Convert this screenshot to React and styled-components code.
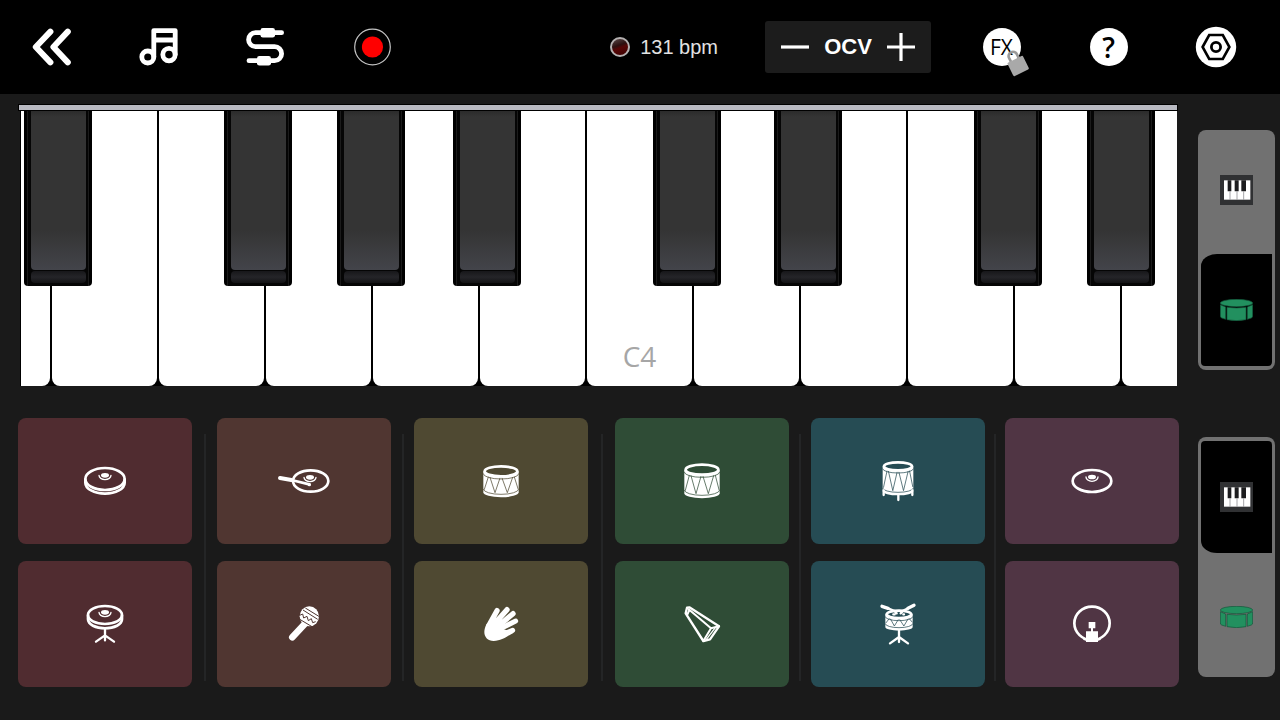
import React from 'react'
import styled, { createGlobalStyle, css } from 'styled-components'

const GlobalStyle = createGlobalStyle`
    * {
        box-sizing: border-box;
    }

    body {
        margin: 0;
        background: #1a1a1a;
        font-family: "Liberation Sans", Arial, sans-serif;
    }

    button {
        margin: 0;
        padding: 0;
        border: 0;
        background: none;
        color: inherit;
        font: inherit;
        cursor: pointer;
    }

    svg {
        display: block;
        flex: none;
    }
`

const Page = styled.div`
    display: flex;
    flex-direction: column;
    min-height: 100vh;
    background: #1a1a1a;
`

/* ---------- top bar ---------- */

const TopBar = styled.header`
    display: flex;
    align-items: center;
    gap: 37px;
    height: 94px;
    padding: 0 31px 0 17px;
    background: #000;
    color: #fff;
`

const BarGroup = styled.div`
    display: flex;
    align-items: center;
    gap: 40px;
`

const TempoGroup = styled.div`
    display: flex;
    align-items: center;
    gap: 47px;
    margin-left: auto;
`

const BarButton = styled.button`
    display: flex;
    align-items: center;
    justify-content: center;
    width: 67px;
    height: 67px;
`

const Tempo = styled.button`
    display: flex;
    align-items: center;
    gap: 10px;
    color: #e2e2e2;
    font-size: 20px;
    line-height: 24px;
`

const Led = styled.span`
    width: 20px;
    height: 20px;
    border: 2px solid #b4b0b0;
    border-radius: 50%;
    background: linear-gradient(160deg, #5a4a4a 0%, #2c1010 40%, #560606 55%, #3a0000 100%);
`

const Stepper = styled.div`
    display: flex;
    align-items: center;
    justify-content: space-between;
    width: 166px;
    height: 52px;
    padding: 0 16px;
    border-radius: 3px;
    background: #1c1c1c;
    font-size: 22px;
    font-weight: bold;
    line-height: 26px;
`

const StepButton = styled.button`
    display: flex;
    align-items: center;
    height: 52px;
`

const Badge = styled.span`
    position: relative;
    display: flex;
    align-items: center;
    justify-content: center;
    width: 38px;
    height: 38px;
    border-radius: 50%;
    background: #fff;
    color: #000;
    font-family: "Open Sans", "Noto Sans", sans-serif;
    font-size: ${({ $large }) => ($large ? 28 : 21)}px;
    font-weight: ${({ $large }) => ($large ? 600 : 500)};
    line-height: 38px;
`

const Lock = styled.svg`
    position: absolute;
    left: 20px;
    top: 20px;
`

/* ---------- layout ---------- */

const Body = styled.main`
    display: flex;
    gap: 19px;
    padding: 10px 5px 32px 18px;
`

const Stage = styled.div`
    flex: 1;
    min-width: 0;
`

const Sidebar = styled.aside`
    display: flex;
    flex-direction: column;
    gap: 67px;
    width: 77px;
    padding-top: 26px;
`

/* ---------- keyboard ---------- */

const Piano = styled.section`
    margin: 0 1px 32px 0;
`

const Rail = styled.div`
    height: 7px;
    border: 1px solid #000;
    background: #b9bac2;
`

const KeyBed = styled.div`
    position: relative;
    display: grid;
    grid-template-columns: 29fr repeat(10, 105fr) 55fr;
    gap: 2px;
    height: 275px;
    margin: 0 1px 0 2px;
    border-left: 1px solid #000;
    background: #000;
`

const WhiteKey = styled.button`
    display: flex;
    align-items: flex-end;
    justify-content: center;
    padding-bottom: 11px;
    background: #fff;
    border-radius: 0 0 8px 8px;
    color: #a6a6a6;
    font-family: "Open Sans", "Noto Sans", sans-serif;
    font-size: 28px;
    font-weight: 500;
    line-height: 38px;

    &:first-child {
        border-bottom-left-radius: 0;
    }

    &:nth-child(12) {
        border-bottom-right-radius: 0;
    }
`

const BlackKey = styled.button`
    position: absolute;
    top: 0;
    left: calc(100% * ${({ $at }) => $at} / 1156);
    display: flex;
    flex-direction: column;
    gap: 1px;
    width: calc(100% * 68 / 1156);
    height: 175px;
    padding: 0 6px 3px 7px;
    border-radius: 0 0 4px 4px;
    background: linear-gradient(90deg, #000 0 3px, #1b1b1b 3px 4px, #050505 4px calc(100% - 4px), #1b1b1b calc(100% - 4px) calc(100% - 3px), #000 calc(100% - 3px));
`

const KeyFace = styled.span`
    flex: 1;
    border-radius: 0 0 4px 4px;
    background: linear-gradient(#2b2b2b 0, #343434 6px, #343434 75%, #43444a 100%);
`

const KeyLip = styled.span`
    height: 12px;
    border-radius: 4px;
    background: linear-gradient(#17171a, #252529 50%, #131315);
`

/* ---------- pads ---------- */

const PadBoard = styled.section`
    display: grid;
    grid-template-columns: 174fr 25fr 174fr 23fr 174fr 27fr 174fr 22fr 174fr 20fr 174fr;
`

const PadColumn = styled.div`
    display: flex;
    flex-direction: column;
    gap: 17px;
`

const Divider = styled.div`
    justify-self: center;
    width: 2px;
    margin: 16px 0 6px;
    background: #242526;
`

/* color is the pad's own tone, the icons use it for their cut-out lines */
const Pad = styled.button`
    display: flex;
    align-items: center;
    justify-content: center;
    height: 126px;
    border-radius: 8px;
    background: ${({ $tone }) => $tone};
    color: ${({ $tone }) => $tone};
`

/* ---------- side switches ---------- */

const Switch = styled.div`
    display: flex;
    flex-direction: column;
    border-radius: 8px;
    background: #717171;
`

const SwitchHalf = styled.button`
    display: flex;
    align-items: center;
    justify-content: center;
    height: 120px;

    ${({ $active, $side }) => $active && css`
        height: 112px;
        margin: 4px 3px;
        background: #000;
        border-radius: ${$side === 'top' ? '4px 4px 0 16px / 4px 4px 0 12px' : '16px 0 4px 4px / 12px 0 4px 4px'};
    `}
`

/* ---------- bar icons ---------- */

const BarSvg = ({ children }) => (
    <svg width="44" height="44" viewBox="0 0 44 44" fill="none" stroke="#fff" strokeLinecap="round" strokeLinejoin="round">
        {children}
    </svg>
)

const BackIcon = () => (
    <BarSvg>
        <path strokeWidth="6" d="M21.4 6.6 6.8 22l14.6 15.4M38.800 6.600 24.400 22 38.800 37.400" />
    </BarSvg>
)

const NotesIcon = () => (
    <BarSvg>
        <g strokeWidth="4.8">
            <circle cx="11.8" cy="32" r="6" />
            <circle cx="33" cy="29.6" r="6.200" />
            <path d="M17.8 32V5.600h21.400v24M17.800 15h21.400" />
        </g>
    </BarSvg>
)

const CableIcon = () => (
    <BarSvg>
        <path strokeWidth="4.8" d="M38.600 7.700H12.600a7 7 0 0 0 0 14h19a7 7 0 0 1 0 14H6" />
        <rect x="17.5" y="3" width="14.500" height="9.600" rx="2.4" fill="#fff" stroke="none" />
        <rect x="14" y="31" width="14" height="9.600" rx="2.4" fill="#fff" stroke="none" />
    </BarSvg>
)

const RecordIcon = () => (
    <BarSvg>
        <circle cx="22.500" cy="22" r="17.8" stroke="#c4c4c4" strokeWidth="1.2" />
        <circle cx="22.500" cy="22" r="10.6" fill="#f00" stroke="none" />
    </BarSvg>
)

const SettingsIcon = () => (
    <svg width="42" height="42" viewBox="-21 -21 42 42" fill="none" stroke="#000">
        <circle r="20.2" fill="#fff" stroke="none" />
        <path strokeWidth="2.6" d="M-13.4 0-6.8-12H6.8L13.4 0 6.8 12H-6.8Z" />
        <circle r="4.6" strokeWidth="2.8" />
    </svg>
)

const StepIcon = ({ plus }) => (
    <svg width="28" height="28" viewBox="0 0 28 28" stroke="#fff" strokeWidth="3.2">
        <path d={plus ? 'M0 14h28M14 0v28' : 'M0 14h28'} />
    </svg>
)

/* ---------- pad icons ---------- */

const PadSvg = ({ children }) => (
    <svg width="60" height="60" viewBox="-90 -90 180 180" fill="none" stroke="#fff" strokeWidth="8" strokeLinecap="round" strokeLinejoin="round">
        {children}
    </svg>
)

const Bell = ({ x = 0, y }) => (
    <g transform={`translate(${x} ${y})`}>
        <ellipse rx="12" ry="7" fill="#fff" stroke="none" />
        <path strokeWidth="4" d="M-18 0A18 13 0 0 0 18 0" />
    </g>
)

const Tripod = ({ x = 0, top, bottom }) => (
    <path strokeWidth="7" d={`M${x} ${top}V${bottom - 4}M${x - 27} ${bottom}L${x} ${bottom - 19}L${x + 27} ${bottom}`} />
)

const Drum = ({ x = 0, rx, ry, top, bottom }) => {
    const rim = top + ry + 4
    const base = bottom - ry
    const u = rx / 53
    const hi = rim + ry + 4
    const lo = bottom - 14
    return (
        <g transform={`translate(${x} 0)`}>
            <path fill="#fff" stroke="none" d={`M${-rx} ${rim}V${base}A${rx} ${ry} 0 0 0 ${rx} ${base}V${rim}Z`} />
            <g stroke="currentColor" strokeWidth="2.2">
                <path d={`M${-rx} ${rim + 8}A${rx} ${ry} 0 0 0 ${rx} ${rim + 8}M${-rx} ${base - 9}A${rx} ${ry} 0 0 0 ${rx} ${base - 9}`} />
                <path d={`M${-50 * u} ${lo - 10}L${-38 * u} ${hi - 2}M${-33 * u} ${hi - 1}L${-18 * u} ${lo}L${-3 * u} ${hi + 1}M${3 * u} ${hi + 1}L${19 * u} ${lo}L${35 * u} ${hi - 1}M${40 * u} ${hi - 2}L${51 * u} ${lo - 12}`} />
            </g>
            <ellipse cy={rim} rx={rx - 4} ry={ry} fill="currentColor" />
        </g>
    )
}

const HiHat = () => (
    <PadSvg>
        <ellipse cy="-6" rx="59" ry="33" />
        <path d="M-59-4V5A59 33 0 0 0 59 5V-4" />
        <Bell y={-17} />
    </PadSvg>
)

const RideStick = () => (
    <PadSvg>
        <ellipse cx="20" rx="53" ry="32" />
        <Bell x={18} y={-11} />
        <path strokeWidth="12" d="M-72-9-38-3" />
        <path strokeWidth="8" d="M-38-3 16 10" />
        <circle cx="16" cy="11" r="5" fill="#fff" stroke="none" />
    </PadSvg>
)

const Snare = () => (
    <PadSvg>
        <Drum rx={53} ry={15} top={-48} bottom={49} />
    </PadSvg>
)

const Tom = () => (
    <PadSvg>
        <Drum rx={53} ry={15} top={-53} bottom={52} />
    </PadSvg>
)

const FloorTom = () => (
    <PadSvg>
        <Drum rx={46} ry={12} top={-60} bottom={43} />
        <path strokeWidth="7" d="M-43 28V42M43 28V42M1 42V57" />
    </PadSvg>
)

const Cymbal = () => (
    <PadSvg>
        <ellipse rx="58" ry="33" />
        <Bell y={-12} />
    </PadSvg>
)

const HiHatStand = () => (
    <PadSvg>
        <ellipse cy="-27" rx="51" ry="27" />
        <path d="M-51-25V-14A51 27 0 0 0 51-14V-25" />
        <Bell y={-35} />
        <Tripod top={18} bottom={53} />
    </PadSvg>
)

const Maraca = () => (
    <PadSvg>
        <ellipse cx="16" cy="-23" rx="29" ry="30" fill="#fff" stroke="none" />
        <path strokeWidth="20" d="M2 0-35 40" />
        <g stroke="currentColor" strokeWidth="3" strokeLinecap="butt">
            <path d="M4-48 46-22M-3-42 41-14" />
            <path d="M-13-26-4-30-1-18 9-23 13-10 22-16 26-4 35-7" />
            <path d="M-16-16 24 8" />
        </g>
    </PadSvg>
)

const Clap = () => (
    <PadSvg>
        <path fill="#fff" stroke="none" d="M-43 0C-58 27-48 51-22 51C2 50 14 40 38 26L4 14L2-2L-20-16Z" />
        <path strokeWidth="16" d="M-36 4-12-40M-20 0 18-43M-8 6 36-31" />
        <path strokeWidth="15" d="M-6 16 44-9M-10 36 35 19" />
    </PadSvg>
)

const Cowbell = () => (
    <PadSvg>
        <path strokeWidth="7" d="M-38-50 51 7 24 46 4 51-49-32-45-49Z" />
        <path strokeWidth="6" d="M-40-44 27 13 4 51M27 13 51 7M-38-42-44-28" />
        <path strokeWidth="4" d="M40 11 13 46" />
    </PadSvg>
)

const SnareStand = () => (
    <PadSvg>
        <Drum x={3} rx={41} ry={11} top={-44} bottom={20} />
        <path strokeWidth="10" d="M-48-53-30-47M48-56 30-47" />
        <path strokeWidth="7" d="M-30-47-8-38M30-47 12-38" />
        <path strokeWidth="7" d="M-8-36-4-32M12-36 8-32M-14-29H-10M16-29H18" />
        <Tripod x={3} top={20} bottom={58} />
    </PadSvg>
)

const Kick = () => (
    <PadSvg>
        <ellipse cy="-2" rx="53" ry="50" />
        <path fill="#fff" stroke="none" d="M-10-6H10V13H3V22H18V42L28 47 18 50V54H-18V50L-28 47-18 42V22H-3V13H-10Z" />
    </PadSvg>
)

/* ---------- switch icons ---------- */

const PianoGlyph = () => (
    <svg width="33" height="30" viewBox="0 0 99 90">
        <path fill="#303133" d="M0 0h99v90H0z" />
        <path fill="#fff" d="M12 16h79v58H12z" />
        <path fill="#1c1c1e" d="M23 16h11v33H23zM44 16h12v33H44zM64 16h14v33H64z" />
        <path stroke="#77777c" strokeWidth="2" d="M30 49v25M51 49v25M71 49v25" />
    </svg>
)

const DrumGlyph = () => (
    <svg width="33" height="22" viewBox="0 0 99 66" fill="#22905f">
        <path stroke="#14543a" strokeWidth="2" d="M1 17 17 24V61L5 57Q1 55 1 51ZM21 25Q50 29 78 25V62Q50 68 21 62ZM82 24 98 17V51Q98 55 94 57L82 61Z" />
        <path stroke="#14543a" strokeWidth="2" d="M1 12A48.500 11 0 0 1 98 12A48.500 11 0 0 1 1 12Z" />
    </svg>
)

/* ---------- data ---------- */

const whiteKeys = ['D3', 'E3', 'F3', 'G3', 'A3', 'B3', 'C4', 'D4', 'E4', 'F4', 'G4', 'A4']

const blackKeys = [3, 203, 316, 432, 632, 753, 953, 1066]

const padColumns = [
    { tone: '#502c30', pads: [['Closed hi-hat', HiHat], ['Pedal hi-hat', HiHatStand]] },
    { tone: '#503631', pads: [['Ride', RideStick], ['Maraca', Maraca]] },
    { tone: '#4f4932', pads: [['Snare', Snare], ['Clap', Clap]] },
    { tone: '#2f4c36', pads: [['Tom', Tom], ['Cowbell', Cowbell]] },
    { tone: '#264c54', pads: [['Floor tom', FloorTom], ['Snare roll', SnareStand]] },
    { tone: '#503544', pads: [['Crash', Cymbal], ['Kick', Kick]] },
]

const PanelSwitch = ({ label, value }) => (
    <Switch role="group" aria-label={label}>
        <SwitchHalf aria-label="Piano" aria-pressed={value === 'piano'} $active={value === 'piano'} $side="top">
            <PianoGlyph />
        </SwitchHalf>
        <SwitchHalf aria-label="Drums" aria-pressed={value === 'drums'} $active={value === 'drums'} $side="bottom">
            <DrumGlyph />
        </SwitchHalf>
    </Switch>
)

const Header = () => (
    <TopBar>
        <BarGroup>
            <BarButton aria-label="Back"><BackIcon /></BarButton>
            <BarButton aria-label="Songs"><NotesIcon /></BarButton>
            <BarButton aria-label="Connections"><CableIcon /></BarButton>
            <BarButton aria-label="Record"><RecordIcon /></BarButton>
        </BarGroup>
        <TempoGroup>
            <Tempo>
                <Led />
                131 bpm
            </Tempo>
            <Stepper>
                <StepButton aria-label="Octave down"><StepIcon /></StepButton>
                <span>OCV</span>
                <StepButton aria-label="Octave up"><StepIcon plus /></StepButton>
            </Stepper>
        </TempoGroup>
        <BarGroup>
            <BarButton>
                <Badge>
                    FX
                    <Lock width="30" height="30" viewBox="0 0 90 90">
                        <g transform="rotate(-26 40 45)">
                            <path fill="none" stroke="#999" strokeWidth="8" d="M27 36V22a13 13 0 0 1 26 0V36" />
                            <rect x="15" y="33" width="52" height="45" rx="4" fill="#a9a9a9" />
                        </g>
                    </Lock>
                </Badge>
            </BarButton>
            <BarButton><Badge $large>?</Badge></BarButton>
            <BarButton aria-label="Settings"><SettingsIcon /></BarButton>
        </BarGroup>
    </TopBar>
)

const App = () => {
    return (
        <Page>
            <GlobalStyle />
            <Header />
            <Body>
                <Stage>
                    <Piano>
                        <Rail />
                        <KeyBed>
                            {whiteKeys.map((note) => (
                                <WhiteKey key={note} aria-label={note}>
                                    {note === 'C4' && note}
                                </WhiteKey>
                            ))}
                            {blackKeys.map((at) => (
                                <BlackKey key={at} $at={at} aria-label="Black key">
                                    <KeyFace />
                                    <KeyLip />
                                </BlackKey>
                            ))}
                        </KeyBed>
                    </Piano>
                    <PadBoard>
                        {padColumns.map(({ tone, pads }, i) => (
                            <React.Fragment key={tone}>
                                {i > 0 && <Divider />}
                                <PadColumn>
                                    {pads.map(([name, Icon]) => (
                                        <Pad key={name} $tone={tone} aria-label={name}>
                                            <Icon />
                                        </Pad>
                                    ))}
                                </PadColumn>
                            </React.Fragment>
                        ))}
                    </PadBoard>
                </Stage>
                <Sidebar>
                    <PanelSwitch label="Upper panel" value="drums" />
                    <PanelSwitch label="Lower panel" value="piano" />
                </Sidebar>
            </Body>
        </Page>
    )
}

export default App
